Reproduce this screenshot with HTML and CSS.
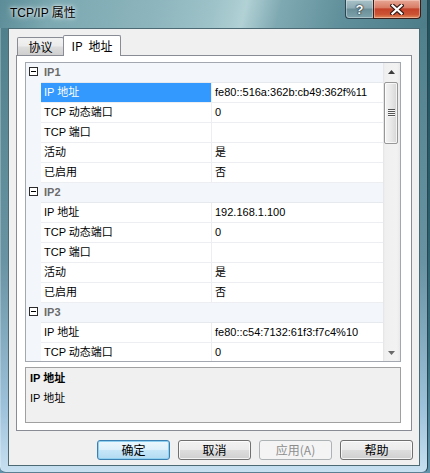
FILE: index.html
```html
<!DOCTYPE html>
<html lang="zh-CN">
<head>
<meta charset="utf-8">
<title>TCP/IP 属性</title>
<link rel="stylesheet" href="styles.css">
</head>
<body>
<div class="window">
  <div class="titlebar">
    <span class="title">TCP/IP 属性</span>
    <div class="caption-buttons">
      <div class="cap cap-help">?</div>
      <div class="cap cap-close">
        <svg width="14" height="11" viewBox="0 0 14 11">
          <path d="M2.5 1.5 L11.5 9.5 M11.5 1.5 L2.5 9.5" stroke="#3a1a14" stroke-width="4.4" stroke-linecap="square" fill="none"/>
          <path d="M2.5 1.5 L11.5 9.5 M11.5 1.5 L2.5 9.5" stroke="#ffffff" stroke-width="2.2" stroke-linecap="square" fill="none"/>
        </svg>
      </div>
    </div>
  </div>

  <div class="client">
    <div class="tabs">
      <div class="tab">协议</div>
      <div class="tab active">IP 地址</div>
    </div>

    <div class="panel">
      <div class="grid">
        <div class="rows">
          <div class="row cat"><span class="gutter"><span class="toggle"></span></span><span class="cat-label">IP1</span></div>
          <div class="row"><span class="gutter"></span><span class="name selected">IP 地址</span><span class="value">fe80::516a:362b:cb49:362f%11</span></div>
          <div class="row"><span class="gutter"></span><span class="name">TCP 动态端口</span><span class="value">0</span></div>
          <div class="row"><span class="gutter"></span><span class="name">TCP 端口</span><span class="value"></span></div>
          <div class="row"><span class="gutter"></span><span class="name">活动</span><span class="value">是</span></div>
          <div class="row"><span class="gutter"></span><span class="name">已启用</span><span class="value">否</span></div>

          <div class="row cat"><span class="gutter"><span class="toggle"></span></span><span class="cat-label">IP2</span></div>
          <div class="row"><span class="gutter"></span><span class="name">IP 地址</span><span class="value">192.168.1.100</span></div>
          <div class="row"><span class="gutter"></span><span class="name">TCP 动态端口</span><span class="value">0</span></div>
          <div class="row"><span class="gutter"></span><span class="name">TCP 端口</span><span class="value"></span></div>
          <div class="row"><span class="gutter"></span><span class="name">活动</span><span class="value">是</span></div>
          <div class="row"><span class="gutter"></span><span class="name">已启用</span><span class="value">否</span></div>

          <div class="row cat"><span class="gutter"><span class="toggle"></span></span><span class="cat-label">IP3</span></div>
          <div class="row"><span class="gutter"></span><span class="name">IP 地址</span><span class="value">fe80::c54:7132:61f3:f7c4%10</span></div>
          <div class="row"><span class="gutter"></span><span class="name">TCP 动态端口</span><span class="value">0</span></div>
        </div>

        <div class="scrollbar">
          <div class="sb-btn">
            <svg width="7" height="4" viewBox="0 0 7 4"><path d="M0 4 L3.5 0 L7 4 Z" fill="#3c3c3c"/></svg>
          </div>
          <div class="sb-track">
            <div class="thumb"><span class="grip"></span></div>
          </div>
          <div class="sb-btn">
            <svg width="7" height="4" viewBox="0 0 7 4"><path d="M0 0 L7 0 L3.5 4 Z" fill="#6a6a6a"/></svg>
          </div>
        </div>
      </div>

      <div class="desc">
        <div class="desc-title">IP 地址</div>
        <div class="desc-text">IP 地址</div>
      </div>
    </div>

    <div class="buttons">
      <div class="btn default">确定</div>
      <div class="btn">取消</div>
      <div class="btn disabled">应用(A)</div>
      <div class="btn">帮助</div>
    </div>
  </div>
</div>
</body>
</html>
```

FILE: styles.css
```css
* {
  box-sizing: border-box;
}

html,
body {
  margin: 0;
  padding: 0;
}

body {
  width: 430px;
  height: 473px;
  overflow: hidden;
  background: linear-gradient(180deg, #24515c 0%, #2c5f6b 45%, #356c7a 75%, #5f93ab 100%);
  font-family: "Liberation Sans", "Noto Sans CJK SC", sans-serif;
  color: #000;
}

/* Aero glass frame */
.window {
  width: 428px;
  height: 473px;
  display: flex;
  flex-direction: column;
  padding: 0 7px 7px 8px;
  background: linear-gradient(180deg, #4c7d89 0%, #5a8995 25%, #6893a2 55%, #9cc1da 86%, #c7e0f1 100%);
  border-right: 1px solid #284550;
  border-bottom: 1px solid #5a7e92;
  border-radius: 0 0 6px 6px;
  box-shadow: inset 1px 0 0 rgba(255, 255, 255, 0.25);
}

.titlebar {
  height: 28px;
  flex: none;
  display: flex;
  align-items: flex-start;
  margin: 0 -7px 0 -8px;
  padding: 0 7px 0 10px;
  background: linear-gradient(104deg, #5b8c97 0%, #7ba8b1 12%, #8db5bd 36%, #9ec3c9 50%, #b1d1d5 57%, #7fa9b2 65%, #5f8f9a 80%, #4d7d89 100%);
}

.title {
  padding-top: 5px;
  font-size: 12px;
  line-height: 16px;
  color: #000;
  text-shadow: 0 0 6px rgba(255, 255, 255, 0.95), 0 0 3px rgba(255, 255, 255, 0.9);
}

.caption-buttons {
  margin-left: auto;
  margin-right: -1px;
  display: flex;
}

.cap {
  height: 19px;
  display: flex;
  align-items: center;
  justify-content: center;
  border: 1px solid #2c4550;
  border-top: none;
}

.cap-help {
  width: 28px;
  border-radius: 0 0 0 4px;
  border-right: none;
  background: linear-gradient(180deg, #a9c2c9 0%, #8eaab3 45%, #6a8e98 50%, #7fa3ad 100%);
  box-shadow: inset 0 0 0 1px rgba(255, 255, 255, 0.35);
  font-weight: bold;
  font-size: 13px;
  line-height: 15px;
  color: #fff;
  text-shadow: 0 0 1px #1d2e36, 0 0 1px #1d2e36, 0 0 2px #1d2e36;
}

.cap-close {
  width: 48px;
  border-radius: 0 0 4px 0;
  border-color: #3b1c17;
  background: linear-gradient(180deg, #e6a795 0%, #d97d66 42%, #c4422a 50%, #cc5334 80%, #e08a5c 100%);
  box-shadow: inset 0 0 0 1px rgba(255, 220, 210, 0.45);
}

.cap-close svg {
  display: block;
}

/* Dialog client area */
.client {
  height: 438px;
  flex: none;
  border: 1px solid #4b6a74;
  background: #f0f0f0;
  padding: 6px 7px 5px 7px;
  display: flex;
  flex-direction: column;
}

.tabs {
  height: 20px;
  flex: none;
  display: flex;
  align-items: flex-end;
  padding-left: 1px;
  position: relative;
  z-index: 1;
}

.tab {
  height: 18px;
  width: 47px;
  border: 1px solid #898c95;
  border-bottom: none;
  border-radius: 2px 2px 0 0;
  background: linear-gradient(180deg, #f2f2f2 0%, #ebebeb 48%, #dddddd 52%, #cfcfcf 100%);
  font-family: "Noto Sans CJK SC", sans-serif;
  font-size: 12px;
  line-height: 17px;
  text-align: center;
}

.tab.active {
  height: 21px;
  width: 58px;
  margin-left: -1px;
  margin-bottom: -1px;
  background: #fff;
  line-height: 19px;
  word-spacing: 3px;
}

.panel {
  flex: none;
  height: 376px;
  border: 1px solid #898c95;
  background: #fff;
  padding: 6px 10px 7px 8px;
  display: flex;
  flex-direction: column;
}

/* Property grid */
.grid {
  height: 300px;
  flex: none;
  border: 1px solid #a3a8b0;
  display: flex;
  background: #fff;
}

.rows {
  flex: 1;
  overflow: hidden;
  font-size: 11px;
}

.row {
  height: 20px;
  display: flex;
}

.gutter {
  width: 15px;
  flex: none;
  background: #f3f6fb;
  position: relative;
}

.toggle {
  position: absolute;
  left: 3px;
  top: 4px;
  width: 9px;
  height: 9px;
  border: 1px solid #2b2b2b;
  background: #fff;
}

.toggle::after {
  content: "";
  position: absolute;
  left: 1px;
  top: 3px;
  width: 5px;
  height: 1px;
  background: #000;
}

.name {
  width: 171px;
  flex: none;
  padding-left: 3px;
  line-height: 19px;
  border-right: 1px solid #eceef2;
  border-bottom: 1px solid #eceef2;
  white-space: nowrap;
}

.name.selected {
  background: #3399ff;
  color: #fff;
}

.value {
  flex: 1;
  padding-left: 3px;
  line-height: 19px;
  border-bottom: 1px solid #eceef2;
  white-space: nowrap;
}

.row.cat {
  background: #f3f6fb;
}

.cat-label {
  flex: 1;
  padding-left: 3px;
  line-height: 19px;
  font-weight: bold;
  color: #6b6b6b;
  border-bottom: 1px solid #e6e9ee;
}

.scrollbar {
  width: 17px;
  flex: none;
  display: flex;
  flex-direction: column;
  background: linear-gradient(90deg, #e4e4e4 0, #f0f0f0 2px, #f2f2f2 14px, #e9e9e9 100%);
}

.sb-btn {
  height: 17px;
  flex: none;
  display: flex;
  align-items: center;
  justify-content: center;
}

.sb-btn svg {
  display: block;
}

.sb-track {
  flex: 1;
  padding-top: 2px;
}

.thumb {
  margin-left: 1px;
  width: 14px;
  height: 62px;
  border: 1px solid #979797;
  border-radius: 2px;
  background: linear-gradient(90deg, #f4f4f4 0%, #e8e8e8 50%, #d6d6d6 100%);
  box-shadow: inset 0 0 0 1px rgba(255, 255, 255, 0.7);
  display: flex;
  align-items: center;
  justify-content: center;
}

.grip {
  width: 7px;
  height: 8px;
  background: repeating-linear-gradient(180deg, #555 0 1px, #f6f6f6 1px 2px);
}

/* Description pane */
.desc {
  margin-top: 5px;
  height: 56px;
  flex: none;
  background: #f0f0f0;
  border: 1px solid #a0a0a0;
  padding: 0 4px;
  font-size: 11px;
  line-height: 20px;
}

.desc-title {
  font-weight: bold;
}

/* Dialog buttons */
.buttons {
  margin-top: 9px;
  margin-right: -1px;
  height: 20px;
  flex: none;
  display: flex;
  justify-content: flex-end;
  gap: 8px;
}

.btn {
  width: 73px;
  height: 20px;
  border: 1px solid #707070;
  border-radius: 3px;
  background: linear-gradient(180deg, #f2f2f2 0%, #ebebeb 48%, #dddddd 52%, #cfcfcf 100%);
  box-shadow: inset 0 0 0 1px rgba(255, 255, 255, 0.75);
  font-family: "Noto Sans CJK SC", sans-serif;
  font-size: 12px;
  line-height: 18px;
  text-align: center;
}

.btn.default {
  border-color: #3c7fb1;
  background: linear-gradient(180deg, #ecf7fd 0%, #dcf0fb 48%, #c6e6f8 52%, #b1daf2 100%);
  box-shadow: inset 0 0 0 1px #8fd0f1;
}

.btn.disabled {
  border-color: #adb2b5;
  background: #f4f4f4;
  box-shadow: none;
  color: #8d8d8d;
}
```
